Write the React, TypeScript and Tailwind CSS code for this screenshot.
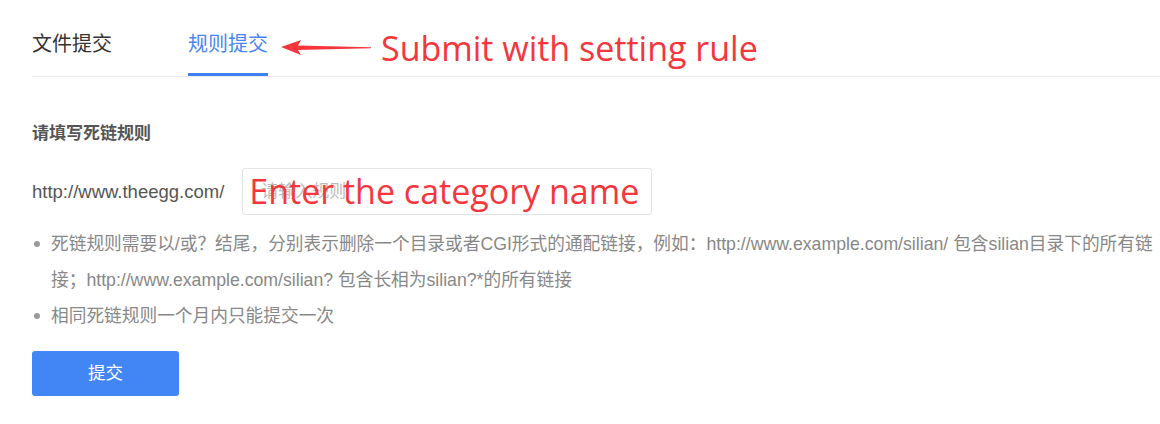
import React from 'react';

const tabs = ['文件提交', '规则提交'];

function Arrow() {
  return (
    <svg className="absolute left-[279px] top-[38px]" width="94" height="20" viewBox="0 0 94 20">
      <polygon points="2,9 22,2 19,7.5 92,9.3 92,10.3 19,12 22,17" fill="#f5363c" />
    </svg>
  );
}

export default function App() {
  return (
    <div
      className="relative w-[1160px] h-[424px] bg-white overflow-hidden"
      style={{ fontFamily: '"Liberation Sans", "Noto Sans CJK SC", sans-serif' }}
    >
      {/* tabs */}
      <div className="ml-[32px] flex gap-[76px] h-[77px] border-b border-[#ebebeb] items-end">
        {tabs.map((t, i) => (
          <div
            key={t}
            className={
              i === 1
                ? 'h-[77px] flex items-center pt-[17px] text-[20px] text-[#4a85f4] border-b-[3px] border-[#3f7ff0] pb-[1px]'
                : 'h-[77px] flex items-center pt-[17px] text-[20px] text-[#333] border-b-[3px] border-transparent pb-[1px]'
            }
          >
            {t}
          </div>
        ))}
      </div>

      <Arrow />
      <div
        className="absolute left-[381px] top-[25px] text-[34px] leading-[46px] text-[#f5363c]"
        style={{ fontFamily: '"Open Sans", sans-serif' }}
      >
        Submit with setting rule
      </div>

      <div className="pl-[32px] pt-[45px]">
        <div className="text-[17px] font-bold text-[#555] leading-[24px]">请填写死链规则</div>

        <div className="mt-[22px] flex items-center">
          <span className="text-[18.5px] text-[#555]">http://www.theegg.com/</span>
          <div className="relative ml-[18px] w-[410px] h-[47px] border border-[#e3e3e3] rounded-[3px] flex items-center pl-[18px]">
            <span className="text-[17px] text-[#bbb]">请输入规则</span>
            <div
              className="absolute left-[6px] top-[-1px] text-[34px] leading-[46px] text-[#f5363c] whitespace-nowrap"
              style={{ fontFamily: '"Open Sans", sans-serif' }}
            >
              Enter the category name
            </div>
          </div>
        </div>

        <ul className="mt-[11px] text-[17.7px] leading-[36px] text-[#888]">
          <li className="flex">
            <span className="w-[19px] shrink-0 flex justify-start pt-[15px] pl-[2px]">
              <span className="block w-[6px] h-[6px] rounded-full bg-[#999]" />
            </span>
            <span className="w-[1110px]">
              死链规则需要以/或？结尾，分别表示删除一个目录或者CGI形式的通配链接，例如：http://www.example.com/silian/ 包含silian目录下的所有链
              <br />
              接；http://www.example.com/silian? 包含长相为silian?*的所有链接
            </span>
          </li>
          <li className="flex">
            <span className="w-[19px] shrink-0 flex justify-start pt-[15px] pl-[2px]">
              <span className="block w-[6px] h-[6px] rounded-full bg-[#999]" />
            </span>
            <span>相同死链规则一个月内只能提交一次</span>
          </li>
        </ul>

        <button className="mt-[17px] w-[147px] h-[45px] rounded-[3px] bg-[#4285f4] text-white text-[17.5px]">
          提交
        </button>
      </div>
    </div>
  );
}
